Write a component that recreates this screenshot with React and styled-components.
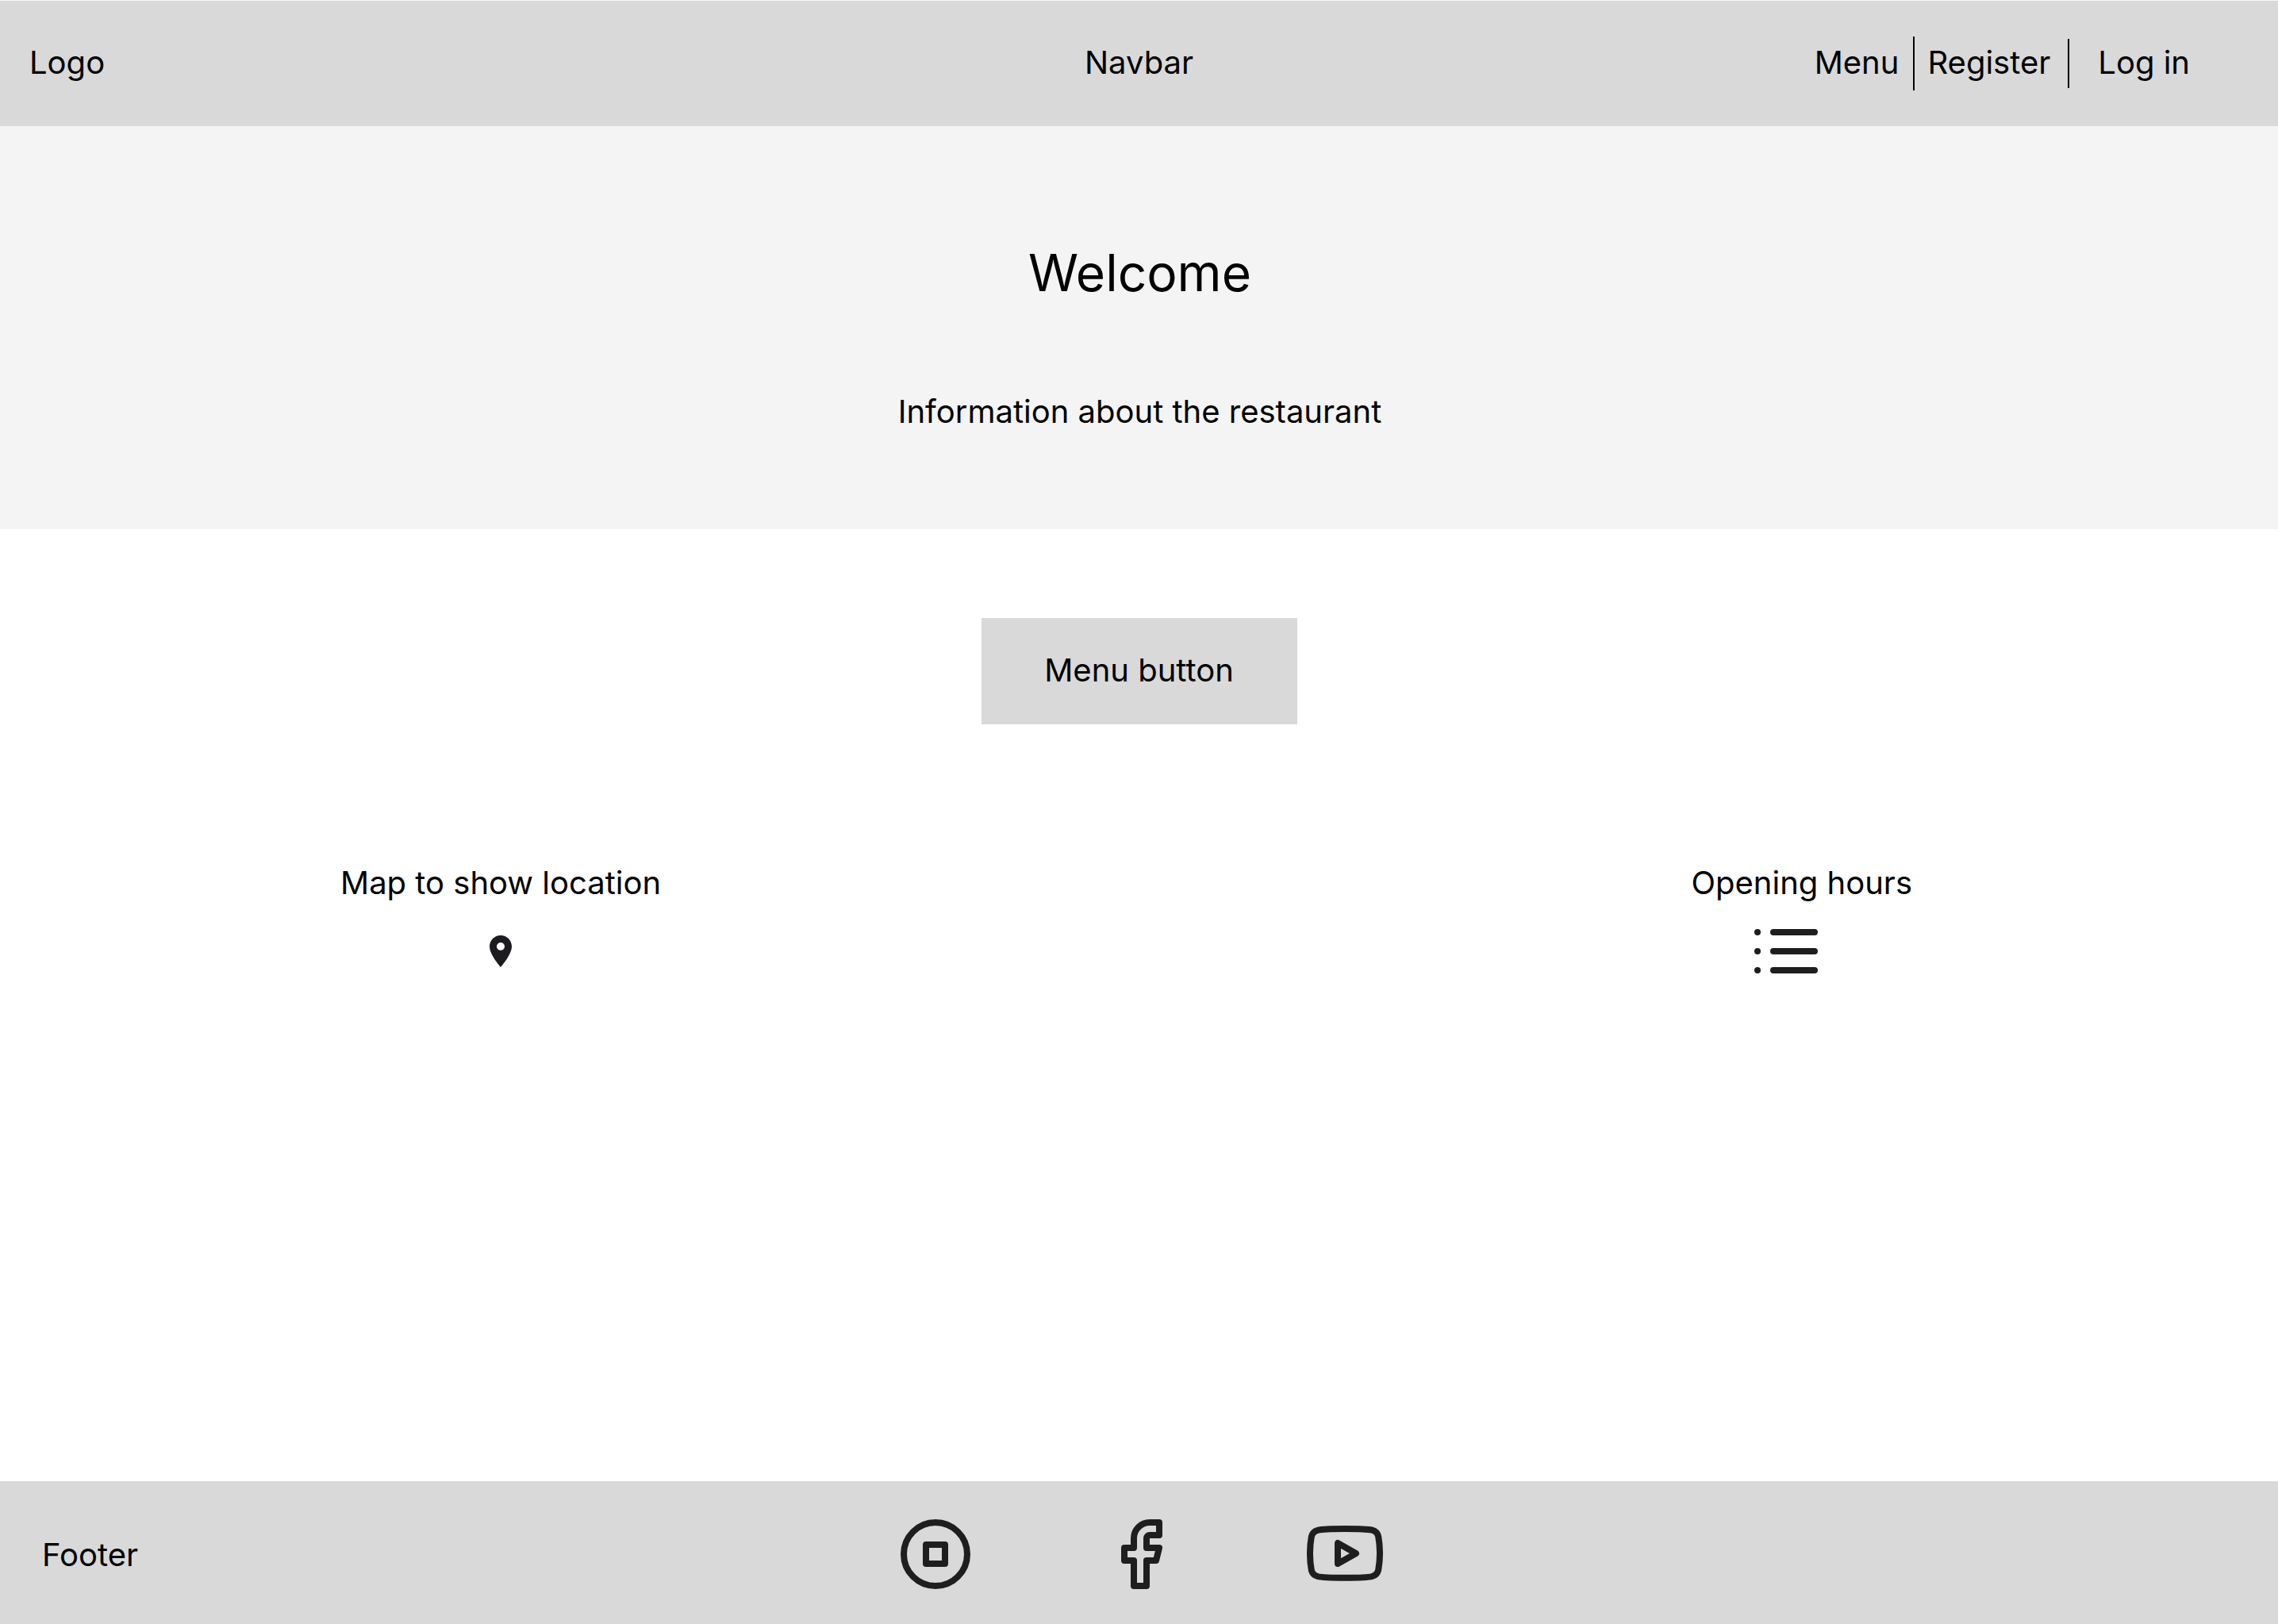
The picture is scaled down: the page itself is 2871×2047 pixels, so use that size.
import React from 'react';
import styled, { createGlobalStyle } from 'styled-components';

const GlobalStyle = createGlobalStyle`
  *, *::before, *::after {
    box-sizing: border-box;
  }

  body {
    margin: 0;
    background: #ffffff;
    color: #000000;
    font-family: Inter, "Liberation Sans", sans-serif;
    font-size: 40px;
    line-height: 49px;
  }
`;

const Page = styled.div`
  display: flex;
  flex-direction: column;
  min-height: 100vh;
`;

const Header = styled.header`
  display: grid;
  grid-template-columns: 1fr auto 1fr;
  align-items: center;
  height: 159px;
  padding: 0 111px 0 37px;
  border-top: 1px solid #f4f4f4;
  background: #d9d9d9;
`;

const HeaderText = styled.span`
  padding-bottom: 3px;
`;

const HeaderTitle = styled(HeaderText)`
  padding-left: 74px;
`;

const Nav = styled.nav`
  display: flex;
  align-items: center;
  justify-content: flex-end;
`;

const NavLink = styled.a`
  padding-bottom: 3px;
  color: inherit;
  text-decoration: none;
  white-space: nowrap;
`;

const Divider = styled.span`
  width: 2px;
  height: ${({ $height }) => $height}px;
  margin: 0 ${({ $after }) => $after}px 0 ${({ $before }) => $before}px;
  background: #000000;
`;

const Hero = styled.section`
  display: flex;
  flex-direction: column;
  align-items: center;
  gap: 111px;
  padding: 146px 36px 124px 38px;
  background: #f4f4f4;
  text-align: center;
`;

const Title = styled.h1`
  margin: 0;
  font-size: 64px;
  font-weight: 400;
  line-height: 78px;
`;

const Text = styled.p`
  margin: 0;
`;

const Main = styled.main`
  flex: 1;
`;

const Actions = styled.div`
  display: flex;
  justify-content: center;
  padding: 112px 36px 0;
`;

const MenuButton = styled.button`
  width: 398px;
  padding: 41px 0 44px;
  border: 0;
  background: #d9d9d9;
  color: inherit;
  font: inherit;
  cursor: pointer;
`;

const Details = styled.div`
  display: flex;
  justify-content: space-between;
  padding: 175px 461px 64px 429px;
`;

const Detail = styled.section`
  display: flex;
  flex-direction: column;
  align-items: center;
  gap: 14px;
`;

const DetailTitle = styled.h2`
  margin: 0;
  font-size: 40px;
  font-weight: 400;
  line-height: 49px;
`;

const IconSlot = styled.div`
  display: flex;
  align-items: center;
  height: 96px;
  padding-right: ${({ $indent = 0 }) => $indent}px;
`;

const Footer = styled.footer`
  display: grid;
  grid-template-columns: 1fr auto 1fr;
  align-items: center;
  height: 180px;
  padding: 4px 50px 0 53px;
  background: #d9d9d9;
`;

const Socials = styled.div`
  display: flex;
  gap: 162px;
`;

const SocialLink = styled.a`
  display: block;
  color: #1e1e1e;
`;

const Svg = styled.svg`
  display: block;
`;

function LineIcon({ children }) {
  return (
    <Svg
      width="96"
      height="96"
      viewBox="0 0 24 24"
      fill="none"
      stroke="#1e1e1e"
      strokeWidth="2"
      strokeLinecap="round"
      strokeLinejoin="round"
      aria-hidden="true"
    >
      {children}
    </Svg>
  );
}

function PinIcon() {
  return (
    <Svg width="48" height="48" viewBox="0 0 24 24" fill="#1d1b20" aria-hidden="true">
      <path d="M12 2C8.13 2 5 5.13 5 9c0 5.25 7 13 7 13s7-7.75 7-13c0-3.87-3.13-7-7-7zm0 9.5a2.5 2.5 0 0 1 0-5 2.5 2.5 0 0 1 0 5z" />
    </Svg>
  );
}

export default function App() {
  return (
    <Page>
      <GlobalStyle />
      <Header>
        <HeaderText>Logo</HeaderText>
        <HeaderTitle>Navbar</HeaderTitle>
        <Nav aria-label="Main">
          <NavLink href="#menu">Menu</NavLink>
          <Divider $height={68} $before={18} $after={16} />
          <NavLink href="#register">Register</NavLink>
          <Divider $height={62} $before={22} $after={36} />
          <NavLink href="#login">Log in</NavLink>
        </Nav>
      </Header>
      <Main>
        <Hero>
          <Title>Welcome</Title>
          <Text>Information about the restaurant</Text>
        </Hero>
        <Actions>
          <MenuButton type="button">Menu button</MenuButton>
        </Actions>
        <Details>
          <Detail>
            <DetailTitle>Map to show location</DetailTitle>
            <IconSlot>
              <PinIcon />
            </IconSlot>
          </Detail>
          <Detail>
            <DetailTitle>Opening hours</DetailTitle>
            <IconSlot $indent={40}>
              <LineIcon>
                <path d="M8 6h13M8 12h13M8 18h13M3 6h.01M3 12h.01M3 18h.01" />
              </LineIcon>
            </IconSlot>
          </Detail>
        </Details>
      </Main>
      <Footer>
        <Text>Footer</Text>
        <Socials>
          <SocialLink href="#instagram" aria-label="Instagram">
            <LineIcon>
              <circle cx="12" cy="12" r="10" />
              <path d="M9 9h6v6H9z" />
            </LineIcon>
          </SocialLink>
          <SocialLink href="#facebook" aria-label="Facebook">
            <LineIcon>
              <path d="M18 2h-3a5 5 0 0 0-5 5v3H7v4h3v8h4v-8h3l1-4h-4V7a1 1 0 0 1 1-1h3z" />
            </LineIcon>
          </SocialLink>
          <SocialLink href="#youtube" aria-label="YouTube">
            <LineIcon>
              <path d="M22.54 6.42a2.78 2.78 0 0 0-1.94-2C18.88 4 12 4 12 4s-6.88 0-8.6.46a2.78 2.78 0 0 0-1.94 2A29 29 0 0 0 1 11.75a29 29 0 0 0 .46 5.33A2.78 2.78 0 0 0 3.4 19c1.72.46 8.6.46 8.6.46s6.88 0 8.6-.46a2.78 2.78 0 0 0 1.94-2 29 29 0 0 0 .46-5.25 29 29 0 0 0-.46-5.33z" />
              <path d="M9.75 15.02l5.75-3.27-5.75-3.27v6.54z" />
            </LineIcon>
          </SocialLink>
        </Socials>
      </Footer>
    </Page>
  );
}
